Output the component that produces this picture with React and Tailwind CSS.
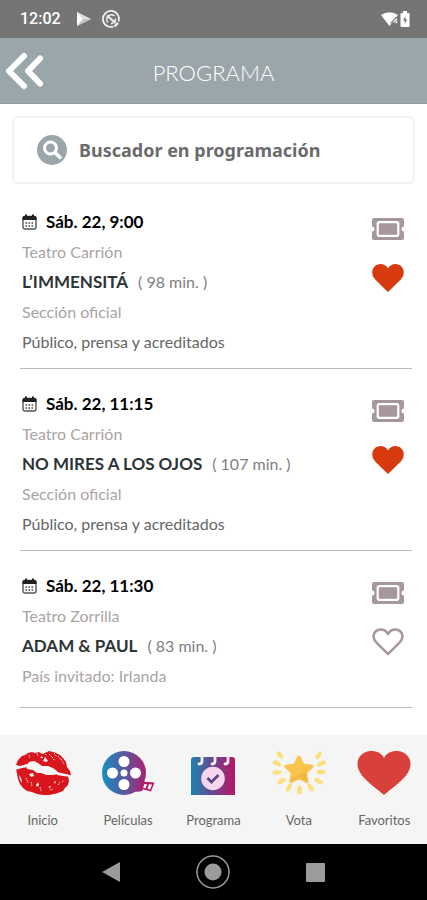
import React, { useState } from "react";

const sessions = [
  {
    date: "Sáb. 22, 9:00",
    venue: "Teatro Carrión",
    title: "L’IMMENSITÁ",
    length: "( 98 min. )",
    section: "Sección oficial",
    audience: "Público, prensa y acreditados",
    favourite: true,
  },
  {
    date: "Sáb. 22, 11:15",
    venue: "Teatro Carrión",
    title: "NO MIRES A LOS OJOS",
    length: "( 107 min. )",
    section: "Sección oficial",
    audience: "Público, prensa y acreditados",
    favourite: true,
  },
  {
    date: "Sáb. 22, 11:30",
    venue: "Teatro Zorrilla",
    title: "ADAM & PAUL",
    length: "( 83 min. )",
    section: "País invitado: Irlanda",
    favourite: false,
  },
];

function StatusBar() {
  return (
    <div className="flex h-[38px] items-center justify-between bg-[#757575] pr-[17px] pl-5 text-white">
      <div className="flex items-center gap-[15px]">
        <span className="font-['Roboto',sans-serif] text-base font-medium">12:02</span>
        <div className="flex items-center gap-[10px]">
          <svg className="h-4 w-4" viewBox="0 0 16 16" aria-hidden="true">
            <path d="M1 1v14l14-7z" fill="#e4e4e4" />
            <path d="M7.500 8L15 8 1 15z" fill="#c4c4c4" />
            <path d="M1 1v14l5-7z" fill="#fff" />
          </svg>
          <svg className="h-[18px] w-[18px]" viewBox="0 0 18 18" fill="none" stroke="#f0f0f0" aria-hidden="true">
            <path d="M11.500 16.500A8 8 0 1 1 16.500 11.500" strokeWidth="1.800" />
            <path d="M6 12.500A4.600 4.600 0 0 1 12.500 6M13.500 8.500A4.600 4.600 0 0 1 9 13.600" strokeWidth="1.600" />
            <path d="M5 5.500l8.500 7.500" strokeWidth="2" />
            <path d="M12.500 16.500l3.500-3.500" strokeWidth="2.400" />
          </svg>
        </div>
      </div>
      <div className="flex items-center gap-[2px]">
        <svg className="h-4 w-[17px]" viewBox="0 0 17 16" aria-hidden="true">
          <path d="M0 4Q8.500-1.500 17 4L8.500 15z" fill="#fff" />
          <path d="M15.500 6v7M15.500 7l-3.500 4h4" fill="none" stroke="#757575" strokeWidth="2.600" />
          <path d="M15.500 7v5.500M15.500 7.500l-3 3.500h4" fill="none" stroke="#ddd" strokeWidth="1.200" />
        </svg>
        <svg className="h-4 w-[10px]" viewBox="0 0 10 16" aria-hidden="true">
          <path d="M3 0h4v2h1.500q1 0 1 1v12q0 1-1 1h-7q-1 0-1-1V3q0-1 1-1H3z" fill="#fff" />
          <path d="M5.500 5L3 9.500h1.800v3.500L7.200 8.500H5.500z" fill="#757575" />
        </svg>
      </div>
    </div>
  );
}

function CalendarIcon() {
  return (
    <svg className="h-4 w-[15px] shrink-0" viewBox="0 0 15 16" aria-hidden="true">
      <rect x="1" y="2.500" width="13" height="12.500" rx="2" fill="#fff" stroke="#555" strokeWidth="1.400" />
      <path d="M.5 6V4a2 2 0 0 1 2-2h10a2 2 0 0 1 2 2v2z" fill="#222" />
      <path d="M4 .5v3M11 .5v3" stroke="#222" strokeWidth="2" />
      <path d="M3.500 9h8M3.500 12h8" stroke="#444" strokeWidth="1.600" strokeDasharray="1.600 1.400" />
    </svg>
  );
}

function TicketIcon() {
  return (
    <svg className="h-[22px] w-8" viewBox="0 0 32 22" aria-hidden="true">
      <path
        d="M2 0h28a2 2 0 0 1 2 2v6.500a2.500 2.500 0 0 0 0 5v6.500a2 2 0 0 1-2 2H2a2 2 0 0 1-2-2v-6.500a2.500 2.500 0 0 0 0-5V2a2 2 0 0 1 2-2z"
        fill="#a5979a"
      />
      <rect x="5.700" y="4.200" width="20.600" height="13.600" rx="1.500" fill="#a5979a" stroke="#fff" strokeWidth="2.200" />
    </svg>
  );
}

function HeartIcon({ filled }) {
  return (
    <svg className="h-7 w-8" viewBox="0 0 32 28" aria-hidden="true">
      {filled ? (
        <path
          d="M16 28C13 25 6 18.500 2.800 15A9 9 0 0 1 .2 8.500C.2 3.500 4 0 8.500 0 11.800 0 14.500 1.500 16 4.500 17.500 1.500 20.200 0 23.500 0 28 0 31.800 3.500 31.800 8.500A9 9 0 0 1 29.200 15C26 18.500 19 25 16 28z"
          fill="#d63a0e"
        />
      ) : (
        <path
          d="M16 26C13 23 7 17.500 4 14A8 8 0 0 1 1.500 8.500C1.500 4.500 4.700 1.500 8.600 1.500 12 1.500 14.500 3.200 16 6 17.500 3.200 20 1.500 23.400 1.500 27.300 1.500 30.500 4.500 30.500 8.500A8 8 0 0 1 28 14C25 17.500 19 23 16 26z"
          fill="none"
          stroke="#a5979a"
          strokeWidth="2.500"
          strokeLinejoin="round"
        />
      )}
    </svg>
  );
}

function Session({ session }) {
  const [favourite, setFavourite] = useState(session.favourite);
  return (
    <li
      className={
        session.audience
          ? "flex justify-between border-b border-[#bdbdbd] pt-5 pr-2 pb-[11px] pl-[2px]"
          : "flex justify-between border-b border-[#bdbdbd] pt-5 pr-2 pb-4 pl-[2px]"
      }
    >
      <div className="min-w-0 text-base leading-[30px] text-[#aaa4a4]">
        <p className="flex items-center gap-[9px] text-[17px] font-bold text-black">
          <CalendarIcon />
          {session.date}
        </p>
        <p>{session.venue}</p>
        <h2 className="text-[#808080]">
          <span className="mr-[10px] text-[17px] font-bold text-[#2d3436]">{session.title}</span>
          {session.length}
        </h2>
        <p>{session.section}</p>
        {session.audience && <p className="text-[#666]">{session.audience}</p>}
      </div>
      <div className="flex flex-col items-center gap-6 pt-[11px]">
        <button type="button" aria-label={"Entradas " + session.title}>
          <TicketIcon />
        </button>
        <button
          type="button"
          aria-label={"Favorito " + session.title}
          aria-pressed={favourite}
          onClick={() => setFavourite(!favourite)}
        >
          <HeartIcon filled={favourite} />
        </button>
      </div>
    </li>
  );
}

function LipsIcon() {
  return (
    <svg className="h-12 w-14" viewBox="0 0 56 48" aria-hidden="true">
      <path
        d="M1 16L3 11 7 7 10 6 13 4 17 3 20 4 24 3 27 5 30 4 34 2 38 3 41 4 45 6 48 9 51 13 52 18 55 22 56 26 53 27 54 32 53 36 50 39 48 42 43 44 39 45 34 46 28 46 22 45 17 43 12 42 8 39 5 35 3 30 2 25 1 20 5 18z"
        fill="#d9151d"
      />
      <path
        d="M11 17L14 13 19 12 23 14 27 17 33 17 38 19 42 22 43 25 38 26 31 26 26 24 22 24 18 21 12 20z"
        fill="#f5f5f5"
      />
      <path d="M0 16l5 1 7-2 1 3-6 1-7 2zM42 23l13 3 1 2-8-1-6-1z" fill="#f5f5f5" />
      <path
        d="M28 12l2-4 3 4-2 1zM25 9l2-2 1 2zM14 25l4-1 1 3-3 1zM21 36l2-3 1 3-2 2zM39 33l2-1-1 3zM33 38l3-1-1 2zM4 26l1 5 2 3-1-5z"
        fill="#f5f5f5"
      />
      <path
        d="M34 5l3 3M39 4l3 4M43 7l3 4M46 10l3 5M37 8l3 4M30 5l2 2M22 4l1 3M14 6l1 3M11 29l2 5M16 33l1 4M25 38l1 4M43 36l2-3M47 33l2-2M35 41l3-1"
        fill="none"
        stroke="#f5f5f5"
        strokeWidth=".9"
        strokeDasharray="1.500 1"
      />
    </svg>
  );
}

function ReelIcon() {
  return (
    <svg className="h-12 w-14" viewBox="0 0 56 48" aria-hidden="true">
      <defs>
        <linearGradient id="reel" gradientUnits="userSpaceOnUse" x1="2" y1="0" x2="48" y2="0">
          <stop offset="0" stopColor="#168fc0" />
          <stop offset=".5" stopColor="#5a569f" />
          <stop offset="1" stopColor="#b51c69" />
        </linearGradient>
      </defs>
      <path d="M38 34Q39 39 44 38L42 42Q34 44 32 40z" fill="#a82373" />
      <circle cx="24" cy="24" r="22" fill="url(#reel)" />
      <g fill="#fff">
        <circle cx="24" cy="12.500" r="5.500" />
        <circle cx="24" cy="35.500" r="5.500" />
        <circle cx="12.500" cy="24" r="5.500" />
        <circle cx="35.500" cy="24" r="5.500" />
        <circle cx="24" cy="24" r="3.500" />
      </g>
      <path d="M42 32.500l12.500 1-3.500 9-11-3z" fill="#b51c69" />
      <path d="M44.500 35l2.500.3-1.500 4-2.500-.6zM49 35.300l3 .3-1.800 5-2.700-.8z" fill="#fff" />
    </svg>
  );
}

function ProgrammeIcon() {
  return (
    <svg className="h-12 w-14" viewBox="0 0 56 48" aria-hidden="true">
      <defs>
        <linearGradient id="programme">
          <stop offset="0" stopColor="#1c84b1" />
          <stop offset=".5" stopColor="#68478e" />
          <stop offset="1" stopColor="#b91562" />
        </linearGradient>
      </defs>
      <path d="M9 8h38q3 0 3 3v35H6V11q0-3 3-3z" fill="url(#programme)" />
      <path
        d="M17 6v6q0 3-3 3M30 6v6q0 3-3 3M43 6v6q0 3-3 3"
        fill="none"
        stroke="#f8f0f6"
        strokeWidth="2.800"
        strokeLinecap="round"
      />
      <circle cx="28" cy="29.500" r="11.800" fill="#f8d5ee" />
      <path d="M22.500 29l4 4 7-7" fill="none" stroke="#594883" strokeWidth="2.800" />
    </svg>
  );
}

function StarIcon() {
  return (
    <svg className="h-12 w-14" viewBox="0 0 56 48" aria-hidden="true">
      <path
        d="M28 8l4 8 9 1.300-6.500 6.300 1.500 9.200-8-4.300-8.200 4.300 1.600-9.200-6.600-6.300 9-1.300z"
        fill="#fbc44d"
        stroke="#fbc44d"
        strokeWidth="3"
        strokeLinejoin="round"
      />
      <path d="M21 30l7-4q7-3 10-8l-3.500 5.600 1.500 9.200-8-4.300-8.200 4.300z" fill="#f4b540" />
      <g fill="#fbdf7a">
        <ellipse cx="9" cy="6" rx="4.200" ry="2.200" transform="rotate(50 9 6)" />
        <ellipse cx="6" cy="14.500" rx="4.600" ry="2.300" transform="rotate(28 6 14.500)" />
        <ellipse cx="6" cy="23.500" rx="4.600" ry="2.300" transform="rotate(-5 6 23.500)" />
        <ellipse cx="10.500" cy="32" rx="4.600" ry="2.300" transform="rotate(-35 10.500 32)" />
        <ellipse cx="18" cy="38.500" rx="4.600" ry="2.200" transform="rotate(-62 18 38.500)" />
        <ellipse cx="28.500" cy="41" rx="2.500" ry="4.600" />
        <ellipse cx="39.500" cy="38.500" rx="4.600" ry="2.200" transform="rotate(58 39.500 38.500)" />
        <ellipse cx="47.500" cy="32" rx="4.600" ry="2.300" transform="rotate(30 47.500 32)" />
        <ellipse cx="50" cy="23" rx="4.600" ry="2.300" transform="rotate(3 50 23)" />
        <ellipse cx="50.500" cy="14.500" rx="4.600" ry="2.300" transform="rotate(-28 50.500 14.500)" />
        <ellipse cx="47.500" cy="6.500" rx="4.200" ry="2.200" transform="rotate(-52 47.500 6.500)" />
      </g>
    </svg>
  );
}

function FavouritesIcon() {
  return (
    <svg className="h-12 w-14" viewBox="0 0 56 48" aria-hidden="true">
      <path
        d="M28 46C23 41.500 12 34 6 26.500 3 22.500 1.500 19 1.500 15 1.500 7.500 7.500 2 15 2 21 2 26 4.500 28 9 30 4.500 35 2 41 2 48.500 2 54.500 7.500 54.500 15 54.500 19 53 22.500 50 26.500 44 34 33 41.500 28 46z"
        fill="#d9403c"
      />
    </svg>
  );
}

const tabs = [
  { label: "Inicio", icon: <LipsIcon /> },
  { label: "Películas", icon: <ReelIcon /> },
  { label: "Programa", icon: <ProgrammeIcon /> },
  { label: "Vota", icon: <StarIcon /> },
  { label: "Favoritos", icon: <FavouritesIcon /> },
];

function SystemBar() {
  return (
    <div className="flex h-14 items-center justify-around bg-black px-[60px]">
      <button type="button" aria-label="Atrás" className="flex h-9 w-9 items-center justify-center">
        <svg className="h-5 w-[18px]" viewBox="0 0 18 20">
          <path d="M18 0v20L0 10z" fill="#9b9b9b" />
        </svg>
      </button>
      <button type="button" aria-label="Pantalla de inicio" className="flex h-9 w-9 items-center justify-center">
        <svg className="h-[34px] w-[34px]" viewBox="0 0 34 34">
          <circle cx="17" cy="17" r="16" fill="none" stroke="#9b9b9b" strokeWidth="1.500" />
          <circle cx="17" cy="17" r="8.500" fill="#9b9b9b" />
        </svg>
      </button>
      <button type="button" aria-label="Recientes" className="flex h-9 w-9 items-center justify-center">
        <svg className="h-[19px] w-[19px]" viewBox="0 0 19 19">
          <rect width="19" height="19" rx="1" fill="#9b9b9b" />
        </svg>
      </button>
    </div>
  );
}

export default function App() {
  return (
    <div className="flex min-h-screen flex-col bg-white font-['Lato',sans-serif]">
      <StatusBar />
      <header className="grid h-[66px] grid-cols-[48px_1fr_48px] items-center border-b border-[#8f9b9e] bg-[#9ba6aa] text-white">
        <button type="button" aria-label="Volver" className="pl-[5px]">
          <svg className="h-10 w-10" viewBox="0 0 40 40" fill="none" stroke="#fff" strokeLinecap="round" strokeLinejoin="round" aria-hidden="true">
            <path d="M19 5L4 20l15 15" strokeWidth="6" />
            <path d="M35 7.500L23 20l12 12.500" strokeWidth="6" />
          </svg>
        </button>
        <h1 className="pt-1 text-center text-[22px] leading-7 font-light">PROGRAMA</h1>
      </header>

      <main className="flex-1">
        <label className="mx-3 mt-3 flex h-[68px] items-center gap-3 rounded-md border-2 border-[#f1f2f5] px-[23px]">
          <svg className="h-[30px] w-[30px] shrink-0" viewBox="0 0 30 30" aria-hidden="true">
            <circle cx="15" cy="15" r="15" fill="#9ba6aa" />
            <circle cx="13.500" cy="13" r="6" fill="none" stroke="#fff" strokeWidth="3" />
            <path d="M18 17.500l5 5" stroke="#fff" strokeWidth="3.500" strokeLinecap="round" />
          </svg>
          <input
            type="text"
            aria-label="Buscador en programación"
            placeholder="Buscador en programación"
            className="min-w-0 flex-1 bg-transparent font-['Noto_Sans',sans-serif] text-lg font-bold outline-none placeholder:text-[#6b6b6b]"
          />
        </label>
        <ul className="mr-[15px] ml-5 pt-[3px]">
          {sessions.map((session) => (
            <Session key={session.date} session={session} />
          ))}
        </ul>
      </main>

      <nav className="grid h-[109px] grid-cols-5 bg-[#f5f5f5]">
        {tabs.map((tab) => (
          <a key={tab.label} href="#" className="flex flex-col items-center gap-[15px] pt-[14px] text-[13px] leading-4 text-[#666]">
            {tab.icon}
            {tab.label}
          </a>
        ))}
      </nav>
      <SystemBar />
    </div>
  );
}
